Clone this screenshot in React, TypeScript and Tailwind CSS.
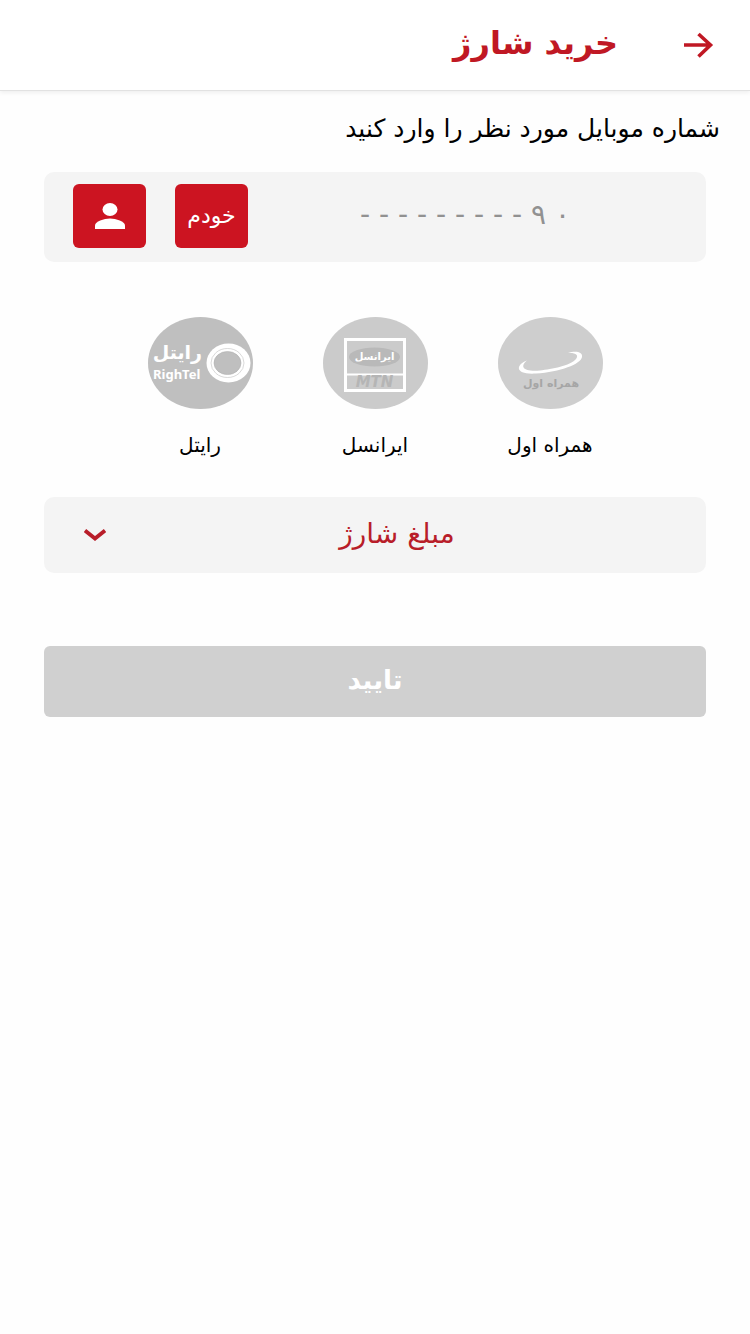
import React, { useState } from 'react';

interface Operator {
  id: string;
  name: string;
  logo: React.ReactNode;
}

const RightelLogo: React.FC = () => (
  <svg viewBox="0 0 105 92" className="h-[92px] w-[105px]" aria-hidden="true">
    <ellipse cx="52.5" cy="46" rx="52.5" ry="46" fill="#bfbfbf" />
    <text x="54" y="42" textAnchor="start" direction="rtl" fontSize="19" fontWeight="700" fill="#fff">رایتل</text>
    <text x="5" y="62" direction="ltr" fontSize="13" fontWeight="700" fill="#fff" fontFamily="'Noto Sans', sans-serif">RighTel</text>
    <ellipse cx="80.5" cy="46" rx="22" ry="19.5" fill="#fff" />
    <ellipse cx="79.5" cy="46" rx="16.5" ry="14.5" fill="none" stroke="#c8c8c8" strokeWidth="0.7" />
    <ellipse cx="79.5" cy="46" rx="13.5" ry="11.5" fill="#bfbfbf" stroke="#b0b0b0" strokeWidth="0.6" />
  </svg>
);

const IrancellLogo: React.FC = () => (
  <svg viewBox="0 0 105 92" className="h-[92px] w-[105px]" aria-hidden="true">
    <ellipse cx="52.5" cy="46" rx="52.5" ry="46" fill="#cbcbcb" />
    <rect x="22.5" y="22.5" width="59" height="51" fill="none" stroke="#fff" strokeWidth="3" />
    <path d="M24 57.5H80" stroke="#fff" strokeWidth="2" />
    <ellipse cx="51.5" cy="40" rx="25.5" ry="9.5" fill="#b9b9b9" />
    <text x="51.5" y="43" textAnchor="middle" direction="rtl" fontSize="10" fontWeight="700" fill="#fff">ایرانسل</text>
    <text x="51.5" y="70" textAnchor="middle" direction="ltr" fontSize="15" fontWeight="700" fontStyle="italic" fill="#b5b5b5">MTN</text>
  </svg>
);

const HamrahAvalLogo: React.FC = () => (
  <svg viewBox="0 0 105 92" className="h-[92px] w-[105px]" aria-hidden="true">
    <ellipse cx="52.5" cy="46" rx="52.5" ry="46" fill="#cecece" />
    <path
      d="M29 43.5C17 48 17 58 38 56.5C62 55 83 47 84 40C85 34 76 34 70 36C78 35.5 81 38 78 42C72 49 54 52 42 53.5C26 55 21 50 29 43.5Z"
      fill="#fff"
    />
    <text x="53" y="70" textAnchor="middle" direction="rtl" fontSize="11" fontWeight="700" fill="#a6a6a6">همراه اول</text>
  </svg>
);

const operators: Operator[] = [
  { id: 'mci', name: 'همراه اول', logo: <HamrahAvalLogo /> },
  { id: 'irancell', name: 'ایرانسل', logo: <IrancellLogo /> },
  { id: 'rightel', name: 'رایتل', logo: <RightelLogo /> },
];

const amounts = ['۱۰٬۰۰۰ ریال', '۲۰٬۰۰۰ ریال', '۵۰٬۰۰۰ ریال', '۱۰۰٬۰۰۰ ریال'];

const App: React.FC = () => {
  const [phone, setPhone] = useState('');
  const [operator, setOperator] = useState('');
  const [amount, setAmount] = useState('');

  const isReady = phone !== '' && operator !== '' && amount !== '';

  return (
    <div dir="rtl" className="min-h-screen bg-[#fefefe] font-['DejaVu_Sans',sans-serif] text-black">
      {/* Header */}
      <header className="flex h-[91px] items-center gap-16 border-b border-[#e2e2e2] bg-white px-9 shadow-[0_2px_4px_rgba(0,0,0,0.06)]">
        <button type="button" aria-label="بازگشت" className="text-[#c01824]">
          <svg viewBox="0 0 32 32" className="h-8 w-8" fill="none" stroke="currentColor" strokeWidth="3.6">
            <path d="M2 16H28M16.5 5L28.5 16L16.5 27.5" />
          </svg>
        </button>
        <h1 className="pb-1 text-[32px] leading-10 font-bold text-[#c01824]">خرید شارژ</h1>
      </header>

      <main>
        <label htmlFor="phone" className="block px-[30px] pt-5 text-[25px] leading-9">
          شماره موبایل مورد نظر را وارد کنید
        </label>

        <form className="mt-[25px] px-11" onSubmit={(e) => e.preventDefault()}>
          {/* Phone number */}
          <div className="flex h-[90px] items-center gap-[29px] rounded-[10px] bg-[#f4f4f4] px-[29px] pb-0.5">
            <input
              id="phone"
              type="tel"
              dir="rtl"
              value={phone}
              onChange={(e) => setPhone(e.target.value)}
              placeholder="۰ ۹ - - - - - - - - -"
              className="min-w-0 flex-1 bg-transparent pr-6 pb-0.5 text-center text-[28px] leading-10 outline-none placeholder:text-[#919191]"
            />
            <button type="button" className="h-16 w-[73px] rounded-md bg-[#cc1421] pb-0.5 text-[22px] text-white">
              خودم
            </button>
            <button
              type="button"
              aria-label="مخاطبین"
              className="flex h-16 w-[73px] items-center justify-center rounded-md bg-[#cc1421] text-white"
            >
              <svg viewBox="0 0 30 26" className="h-[26px] w-[30px]" fill="currentColor">
                <ellipse cx="15" cy="6.5" rx="7.5" ry="6.5" />
                <path d="M0 26V22.5C0 18.5 9 15.5 15 15.5S30 18.5 30 22.5V26Z" />
              </svg>
            </button>
          </div>

          {/* Operators */}
          <div role="radiogroup" aria-label="اپراتور" className="-mx-11 mt-[55px] flex justify-center">
            {operators.map((item) => (
              <label key={item.id} className="relative flex w-[175px] cursor-pointer flex-col items-center gap-5">
                <input
                  type="radio"
                  name="operator"
                  value={item.id}
                  checked={operator === item.id}
                  onChange={() => setOperator(item.id)}
                  className="sr-only"
                />
                {item.logo}
                <span className="text-xl leading-8">{item.name}</span>
              </label>
            ))}
          </div>

          {/* Amount */}
          <div className="relative mt-9">
            <select
              aria-label="مبلغ شارژ"
              value={amount}
              onChange={(e) => setAmount(e.target.value)}
              className="h-[76px] w-full appearance-none rounded-[10px] bg-[#f4f4f4] pb-0.5 pl-11 text-center text-[28px] text-[#b81d29] outline-none [text-align-last:center]"
            >
              <option value="">مبلغ شارژ</option>
              {amounts.map((item) => (
                <option key={item} value={item}>{item}</option>
              ))}
            </select>
            <svg
              viewBox="0 0 22 12"
              className="pointer-events-none absolute top-8 left-10 h-3 w-[22px] text-[#b81d29]"
              fill="none"
              stroke="currentColor"
              strokeWidth="3.8"
            >
              <path d="M1 1.5L11 9.5L21 1.5" />
            </svg>
          </div>

          <button
            type="submit"
            disabled={!isReady}
            className="mt-[73px] h-[71px] w-full rounded-md bg-[#cc1421] pb-0.5 text-[26px] font-bold text-white disabled:bg-[#d0d0d0]"
          >
            تایید
          </button>
        </form>
      </main>
    </div>
  );
};

export default App;
